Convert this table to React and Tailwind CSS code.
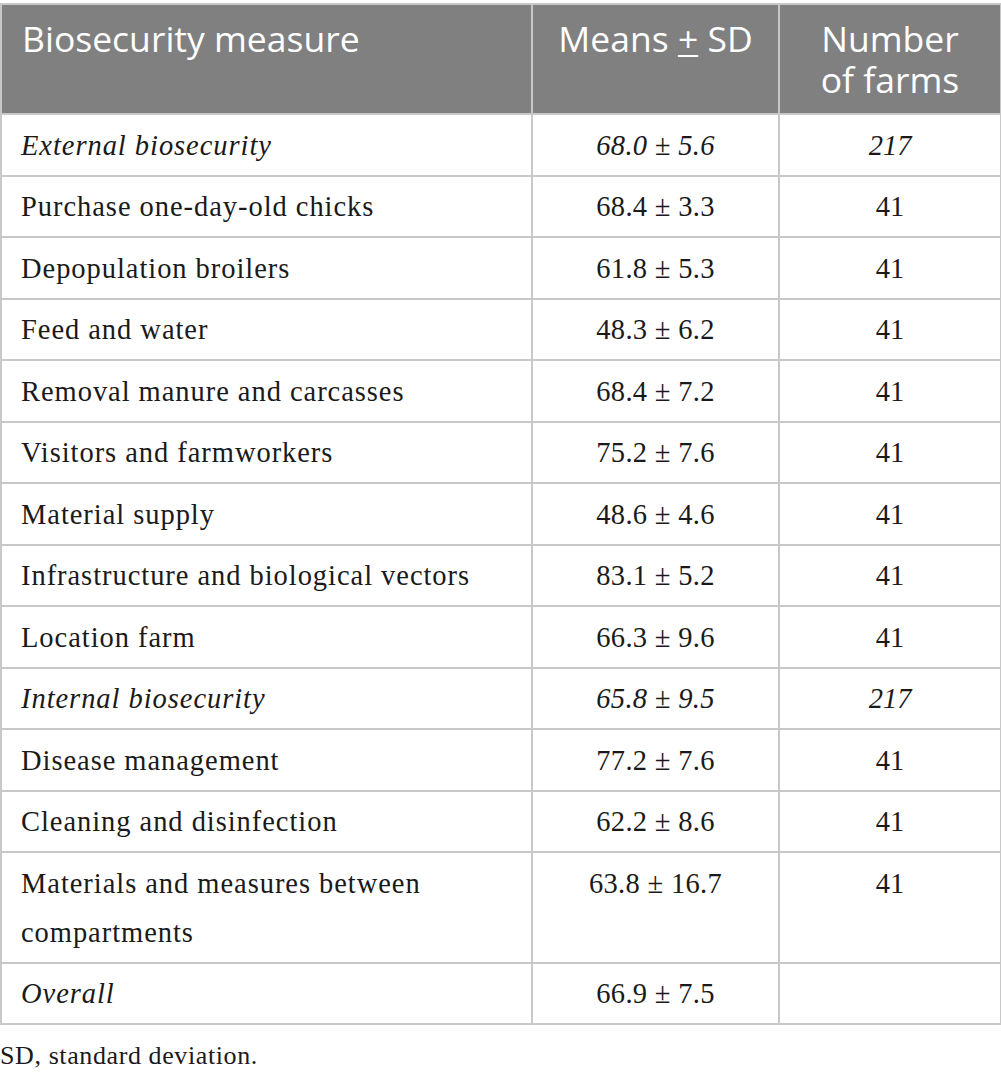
import React from 'react'

const rows = [
  { label: 'External biosecurity', mean: '68.0 ± 5.6', n: '217', italic: true },
  { label: 'Purchase one-day-old chicks', mean: '68.4 ± 3.3', n: '41' },
  { label: 'Depopulation broilers', mean: '61.8 ± 5.3', n: '41' },
  { label: 'Feed and water', mean: '48.3 ± 6.2', n: '41' },
  { label: 'Removal manure and carcasses', mean: '68.4 ± 7.2', n: '41' },
  { label: 'Visitors and farmworkers', mean: '75.2 ± 7.6', n: '41' },
  { label: 'Material supply', mean: '48.6 ± 4.6', n: '41' },
  { label: 'Infrastructure and biological vectors', mean: '83.1 ± 5.2', n: '41' },
  { label: 'Location farm', mean: '66.3 ± 9.6', n: '41' },
  { label: 'Internal biosecurity', mean: '65.8 ± 9.5', n: '217', italic: true },
  { label: 'Disease management', mean: '77.2 ± 7.6', n: '41' },
  { label: 'Cleaning and disinfection', mean: '62.2 ± 8.6', n: '41' },
  { label: 'Materials and measures between compartments', mean: '63.8 ± 16.7', n: '41' },
  { label: 'Overall', mean: '66.9 ± 7.5', n: '', labelItalic: true },
]

export default function App() {
  return (
    <div className="w-[1001px] bg-white pt-[3px] font-['Liberation_Serif',serif] text-[#1a1a1a]">
      <table className="w-[1000px] table-fixed border-collapse">
        <colgroup>
          <col className="w-[531px]" />
          <col className="w-[247px]" />
          <col className="w-[222px]" />
        </colgroup>
        <thead>
          <tr className="bg-[#7f807f] text-white font-['Open_Sans',sans-serif] text-[35.5px] leading-[41px]">
            <th className="border-2 border-[#c8c8c8] px-[20px] pt-[13px] pb-[54px] text-left align-top font-normal">
              Biosecurity measure
            </th>
            <th className="border-2 border-[#c8c8c8] px-2 pt-[13px] pb-[54px] text-center align-top font-normal">
              Means <span className="underline underline-offset-[3px] decoration-2">+</span> SD
            </th>
            <th className="border-2 border-[#c8c8c8] px-2 pt-[13px] pb-[13px] text-center align-top font-normal">
              Number<br />of farms
            </th>
          </tr>
        </thead>
        <tbody className="text-[28.5px] leading-[49px] tracking-[0.95px]">
          {rows.map((r, i) => (
            <tr key={i}>
              <td className={`border-2 border-[#c8c8c8] pl-[19px] pr-4 pt-[5.5px] pb-[5px] align-top ${r.italic || r.labelItalic ? 'italic' : ''}`}>
                {r.label}
              </td>
              <td className={`border-2 border-[#c8c8c8] px-2 pt-[5.5px] pb-[5px] text-center align-top tracking-[0.3px] ${r.italic ? 'italic' : ''}`}>
                {r.mean}
              </td>
              <td className={`border-2 border-[#c8c8c8] px-2 pt-[5.5px] pb-[5px] text-center align-top tracking-normal ${r.italic ? 'italic' : ''}`}>
                {r.n}
              </td>
            </tr>
          ))}
        </tbody>
      </table>
      <p className="mt-[16px] text-[26px] leading-[30px] tracking-[0.6px]">SD, standard deviation.</p>
    </div>
  )
}
